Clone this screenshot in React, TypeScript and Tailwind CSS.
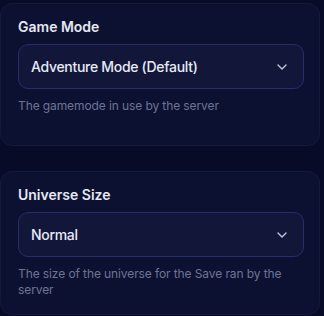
import React from "react";
import { ChevronDown } from "lucide-react";

function Field({ title, value, help, h }: { title: string; value: string; help: string; h: string }) {
  return (
    <div className={`rounded-[12px] border border-[#151a3d] bg-[#0d1131] pl-[17px] pr-[15px] pt-[13px] ${h}`}>
      <div className="text-[14px] leading-[20px] font-semibold text-[#e6e8f2]">{title}</div>
      <div className="mt-[7px] flex h-[45px] items-center justify-between rounded-[10px] border border-[#272d68] bg-[#121739] pl-[12px] pr-[13px]">
        <span className="text-[14px] leading-[20px] font-medium tracking-[-0.3px] text-[#e8eaf6]">{value}</span>
        <ChevronDown size={16} strokeWidth={2} className="text-[#c3c7dc]" />
      </div>
      <p className="mt-[9px] text-[12px] leading-[16px] tracking-[-0.1px] text-[#6d7494]">{help}</p>
    </div>
  );
}

export default function App() {
  return (
    <div
      className="h-[316px] w-[324px] bg-[#080b27] pt-[3px] pr-[4px]"
      style={{ fontFamily: "Inter, 'Noto Sans', sans-serif" }}
    >
      <div className="flex flex-col gap-[25px]">
        <Field
          title="Game Mode"
          value="Adventure Mode (Default)"
          help="The gamemode in use by the server"
          h="h-[143px]"
        />
        <Field
          title="Universe Size"
          value="Normal"
          help="The size of the universe for the Save ran by the server"
          h="h-[144px]"
        />
      </div>
    </div>
  );
}
